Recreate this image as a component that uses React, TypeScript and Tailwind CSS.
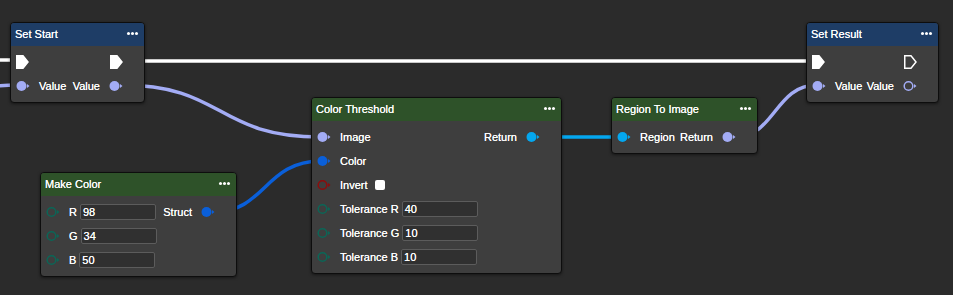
import React from "react";

type PinKind = "data" | "exec";

type Pin = {
  kind: PinKind;
  color?: string;
  filled?: boolean;
};

type Row = {
  left?: Pin;
  leftLabel?: string;
  input?: string;
  checkbox?: boolean;
  right?: Pin;
  rightLabel?: string;
};

type NodeDef = {
  title: string;
  x: number;
  y: number;
  w: number;
  header: "blue" | "green";
  rows: Row[];
};

const PURPLE = "#a3acf5";
const BLUE = "#0a5fd9";
const CYAN = "#04a7ef";
const RED = "#8d0c0c";
const TEAL = "#0b6657";

function PinIcon({ pin }: { pin: Pin }) {
  if (pin.kind === "exec") {
    return (
      <svg width="13" height="14" viewBox="0 0 13 14" className="shrink-0">
        <polygon
          points="0.75,0.75 7,0.75 12,7 7,13.25 0.75,13.25"
          fill={pin.filled ? "#ffffff" : "none"}
          stroke="#ffffff"
          strokeWidth="1.5"
        />
      </svg>
    );
  }
  const c = pin.color ?? PURPLE;
  return (
    <svg width="14" height="12" viewBox="0 0 14 12" className="shrink-0">
      {pin.filled ? (
        <circle cx="5.5" cy="6" r="5" fill={c} />
      ) : (
        <circle cx="5.5" cy="6" r="4.3" fill="none" stroke={c} strokeWidth="1.5" />
      )}
      <polygon points="11,4 13.5,6 11,8" fill={c} />
    </svg>
  );
}

function NodeBox({ node }: { node: NodeDef }) {
  return (
    <div
      className="absolute overflow-hidden rounded-[4px] border border-[#0d0d0d] bg-[#3e3e3e] shadow-[0_1px_3px_rgba(0,0,0,0.5)]"
      style={{ left: node.x, top: node.y, width: node.w }}
    >
      {/* header */}
      <div
        className={`flex h-[23px] items-center justify-between pl-[4px] pr-[6px] text-[11px] text-white [text-shadow:0_0_0.5px_#fff] ${
          node.header === "blue" ? "bg-[#1e3d66]" : "bg-[#2e5229]"
        }`}
      >
        <span>{node.title}</span>
        <span className="-mt-[3px] flex gap-[1px]">
          <span className="h-[3px] w-[3px] rounded-full bg-white" />
          <span className="h-[3px] w-[3px] rounded-full bg-white" />
          <span className="h-[3px] w-[3px] rounded-full bg-white" />
        </span>
      </div>

      {/* body */}
      <div className="pt-[4px] pb-[4px]">
        {node.rows.map((r, i) => (
          <div
            key={i}
            className="flex h-[24px] items-center justify-between text-[11px] text-white [text-shadow:0_0_0.6px_#fff]"
          >
            <div className="flex items-center pl-[5px]">
              {r.left && (
                <div className="flex w-[14px] justify-start">
                  <PinIcon pin={r.left} />
                </div>
              )}
              {r.leftLabel && <span className="ml-[9px]">{r.leftLabel}</span>}
              {r.checkbox && (
                <span className="ml-[7px] h-[10px] w-[10px] rounded-[2px] bg-white" />
              )}
              {r.input !== undefined && (
                <div className="ml-[3px] flex h-[16px] w-[76px] items-center rounded-[2px] border border-[#5c5c5c] bg-[#303030] pl-[2px] text-[11px] text-white">
                  {r.input}
                </div>
              )}
            </div>
            <div className="flex items-center pr-[21px]">
              {r.rightLabel && <span className="mr-[9px]">{r.rightLabel}</span>}
              {r.right && <PinIcon pin={r.right} />}
            </div>
          </div>
        ))}
      </div>
    </div>
  );
}

const nodes: NodeDef[] = [
  {
    title: "Set Start",
    x: 10,
    y: 22,
    w: 135,
    header: "blue",
    rows: [
      { left: { kind: "exec", filled: true }, right: { kind: "exec", filled: true } },
      {
        left: { kind: "data", color: PURPLE, filled: true },
        leftLabel: "Value",
        rightLabel: "Value",
        right: { kind: "data", color: PURPLE, filled: true },
      },
    ],
  },
  {
    title: "Set Result",
    x: 806,
    y: 22,
    w: 133,
    header: "blue",
    rows: [
      { left: { kind: "exec", filled: true }, right: { kind: "exec", filled: false } },
      {
        left: { kind: "data", color: PURPLE, filled: true },
        leftLabel: "Value",
        rightLabel: "Value",
        right: { kind: "data", color: PURPLE, filled: false },
      },
    ],
  },
  {
    title: "Color Threshold",
    x: 311,
    y: 97,
    w: 251,
    header: "green",
    rows: [
      {
        left: { kind: "data", color: PURPLE, filled: true },
        leftLabel: "Image",
        rightLabel: "Return",
        right: { kind: "data", color: CYAN, filled: true },
      },
      { left: { kind: "data", color: BLUE, filled: true }, leftLabel: "Color" },
      { left: { kind: "data", color: RED, filled: false }, leftLabel: "Invert", checkbox: true },
      { left: { kind: "data", color: TEAL, filled: false }, leftLabel: "Tolerance R", input: "40" },
      { left: { kind: "data", color: TEAL, filled: false }, leftLabel: "Tolerance G", input: "10" },
      { left: { kind: "data", color: TEAL, filled: false }, leftLabel: "Tolerance B", input: "10" },
    ],
  },
  {
    title: "Make Color",
    x: 40,
    y: 172,
    w: 197,
    header: "green",
    rows: [
      {
        left: { kind: "data", color: TEAL, filled: false },
        leftLabel: "R",
        input: "98",
        rightLabel: "Struct",
        right: { kind: "data", color: BLUE, filled: true },
      },
      { left: { kind: "data", color: TEAL, filled: false }, leftLabel: "G", input: "34" },
      { left: { kind: "data", color: TEAL, filled: false }, leftLabel: "B", input: "50" },
    ],
  },
  {
    title: "Region To Image",
    x: 611,
    y: 97,
    w: 147,
    header: "green",
    rows: [
      {
        left: { kind: "data", color: CYAN, filled: true },
        leftLabel: "Region",
        rightLabel: "Return",
        right: { kind: "data", color: PURPLE, filled: true },
      },
    ],
  },
];

function Wires() {
  return (
    <svg className="absolute inset-0" width="953" height="295" viewBox="0 0 953 295">
      {/* exec */}
      <path d="M0 60 L14 60" stroke="#ffffff" strokeWidth="3.5" fill="none" />
      <path d="M130 61 L812 61" stroke="#ffffff" strokeWidth="3.5" fill="none" />
      {/* data */}
      <path d="M-40 88 C -10 88, -5 85, 16 85" stroke={PURPLE} strokeWidth="3.5" fill="none" />
      <path d="M121 85 C 225 85, 215 137, 321 137" stroke={PURPLE} strokeWidth="3.5" fill="none" />
      <path d="M214 212 C 265 212, 265 161, 321 161" stroke={BLUE} strokeWidth="3.5" fill="none" />
      <path d="M538 137 L621 137" stroke={CYAN} strokeWidth="3.5" fill="none" />
      <path d="M735 137 C 775 137, 775 85, 817 85" stroke={PURPLE} strokeWidth="3.5" fill="none" />
    </svg>
  );
}

export default function App() {
  return (
    <div
      className="relative h-[295px] w-[953px] overflow-hidden bg-[#2b2b2b]"
      style={{ fontFamily: '"Liberation Sans", Arial, sans-serif' }}
    >
      <Wires />
      {nodes.map((n) => (
        <NodeBox key={n.title} node={n} />
      ))}
    </div>
  );
}
